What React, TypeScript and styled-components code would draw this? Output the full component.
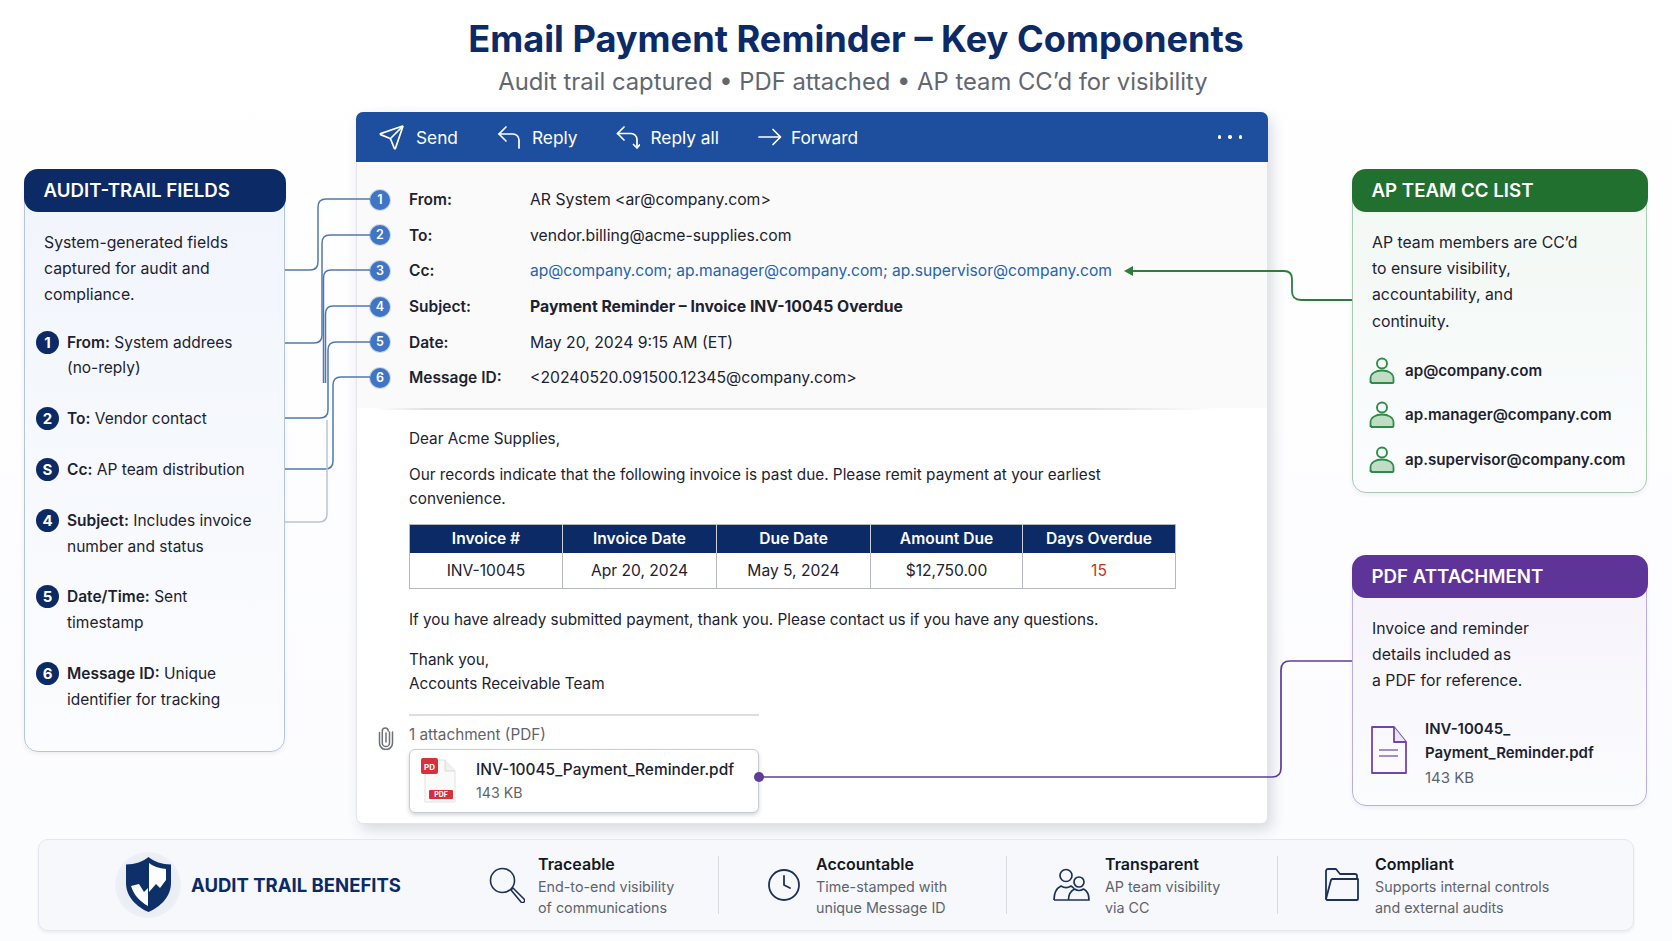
import styled, { createGlobalStyle } from "styled-components";
import { Clock, Send } from "lucide-react";

const GlobalStyle = createGlobalStyle`
  html, body {
    margin: 0;
    padding: 0;
    background: #fff;
  }
  body {
    font-family: Inter, "Liberation Sans", sans-serif;
    color: #1d2230;
  }
  * { box-sizing: border-box; }
`;

const NAVY = "#0c2a66";

const Page = styled.div`
  position: relative;
  width: 1672px;
  height: 941px;
  overflow: hidden;
  background: linear-gradient(180deg, #ffffff 0%, #fdfdff 60%, #fbfcfe 100%);
`;

const Wires = styled.svg`
  position: absolute;
  inset: 0;
  pointer-events: none;
  z-index: 2;
`;

const TitleBlock = styled.header`
  height: 112px;
  padding: 17px 0 0 40px;
  text-align: center;
`;

const Title = styled.h1`
  margin: 0;
  font-size: 36.2px;
  line-height: 44px;
  font-weight: 700;
  color: ${NAVY};
`;

const Subtitle = styled.p`
  margin: 2px 0 0 -6px;
  font-size: 23.8px;
  line-height: 38px;
  color: #62676f;
`;

const MainRow = styled.div`
  display: flex;
  align-items: flex-start;
  padding-left: 24px;
`;

const LeftColumn = styled.div`
  width: 261px;
  padding-top: 58px;
`;

const SideColumn = styled.div`
  width: 295px;
  display: flex;
  flex-direction: column;
  gap: 63px;
  padding-top: 58px;
`;

const Panel = styled.section<{ $edge: string; $tint: string; $height: number }>`
  height: ${(p) => p.$height}px;
  border: 1.5px solid ${(p) => p.$edge};
  border-radius: 14px;
  background: linear-gradient(180deg, ${(p) => p.$tint} 0%, #fbfcfe 100%);
  box-shadow: 0 2px 4px rgba(60, 80, 120, 0.08);
`;

const PanelHead = styled.h2<{ $bg: string }>`
  margin: -2px -1.5px 0;
  height: 42.5px;
  padding: 1px 0 0 20px;
  display: flex;
  align-items: center;
  border-radius: 14px;
  background: ${(p) => p.$bg};
  color: #fff;
  font-size: 18.7px;
  font-weight: 600;
`;

const PanelBody = styled.div`
  padding: 18px 0 0 19px;
  font-size: 15.5px;
`;

const Intro = styled.p`
  margin: 0;
  font-size: 15.8px;
  line-height: 26.4px;
`;

const FieldList = styled.ol`
  list-style: none;
  margin: 21px 0 0 -8px;
  padding: 0;
  display: flex;
  flex-direction: column;
  gap: 25.3px;
`;

const FieldItem = styled.li`
  display: grid;
  grid-template-columns: 23px 1fr;
  column-gap: 8px;
  line-height: 25.6px;
`;

const FieldBadge = styled.span`
  width: 23px;
  height: 23px;
  margin-top: 1px;
  border-radius: 50%;
  background: ${NAVY};
  color: #fff;
  font-size: 15px;
  font-weight: 700;
  line-height: 23px;
  text-align: center;
`;

const Strong = styled.b`
  font-weight: 600;
`;

const MemberList = styled.ul`
  list-style: none;
  margin: 21px 0 0 -3px;
  padding: 0;
  display: flex;
  flex-direction: column;
  gap: 16px;
`;

const Member = styled.li`
  display: flex;
  align-items: center;
  gap: 10px;
  height: 28.5px;
  font-weight: 600;
  font-size: 15.15px;
`;

const PdfFile = styled.div`
  display: flex;
  gap: 17px;
  align-items: flex-start;
  margin: 22px 0 0 -2px;
  font-size: 15px;
  line-height: 24.6px;
  font-weight: 600;
  & > svg {
    margin-top: 8px;
  }
`;

const PdfSize = styled.div`
  font-weight: 400;
  color: #5f646c;
`;

const Mail = styled.main`
  width: 912px;
  height: 712px;
  margin: 0 84px 0 71px;
  border: 1px solid #e2e5ea;
  border-radius: 7px;
  background: #fff;
  box-shadow: 4px 6px 14px rgba(30, 40, 60, 0.16);
  display: flex;
  flex-direction: column;
`;

const Toolbar = styled.nav`
  height: 50px;
  margin: -1px -1px 0;
  padding: 0 26px 0 22px;
  display: flex;
  align-items: center;
  gap: 39px;
  border-radius: 7px 7px 0 0;
  background: #1e4f9e;
  color: #fff;
  font-size: 17.3px;
`;

const ToolButton = styled.span<{ $gap: number }>`
  display: flex;
  align-items: center;
  gap: ${(p) => p.$gap}px;
`;

const Dots = styled.span`
  margin-left: auto;
  display: flex;
  gap: 7px;
  & > i {
    width: 3.5px;
    height: 3.5px;
    border-radius: 50%;
    background: #fff;
  }
`;

const Fields = styled.div`
  height: 246px;
  padding: 20px 0 0 13px;
  background: #fafafa;
  font-size: 15.75px;
`;

const HeaderRow = styled.div`
  height: 35.6px;
  display: grid;
  grid-template-columns: 20px 121px 1fr;
  align-items: center;
`;

const WireBadge = styled.span`
  width: 20px;
  height: 20px;
  border-radius: 50%;
  background: #3f75c4;
  color: #fff;
  font-size: 12.5px;
  font-weight: 600;
  line-height: 20px;
  text-align: center;
  box-shadow: 0 0 0 1px rgba(63, 117, 196, 0.25);
`;

const HeaderLabel = styled.span`
  margin-left: 19px;
  font-size: 15.5px;
  font-weight: 600;
`;

const HeaderValue = styled.span<{ $link?: boolean; $bold?: boolean }>`
  margin-left: 19px;
  color: ${(p) => (p.$link ? "#2464ae" : "inherit")};
  font-size: ${(p) => (p.$link ? "15.6px" : "inherit")};
  font-weight: ${(p) => (p.$bold ? 650 : 400)};
`;

const Rule = styled.div`
  height: 2px;
  margin: 0 48px 0 19px;
  background: linear-gradient(90deg, transparent 0%, #dfe1e5 6%, #dfe1e5 85%, transparent 100%);
`;

const Body = styled.div`
  padding: 17px 0 0 52px;
  font-size: 15.3px;
  line-height: 24px;
`;

const Para = styled.p<{ $top: number }>`
  margin: ${(p) => p.$top}px 0 0;
  max-width: 720px;
`;

const InvoiceTable = styled.table`
  width: 766px;
  margin-top: 13px;
  border-collapse: collapse;
  table-layout: fixed;
  border: 1.5px solid #b5b8bf;
  font-size: 15.6px;
  text-align: center;
`;

const HeadCell = styled.th<{ $width: number }>`
  width: ${(p) => p.$width}px;
  height: 28px;
  padding: 0;
  background: ${NAVY};
  color: #fff;
  font-weight: 600;
  border-left: 1.5px solid #c9cfdb;
  &:first-child { border-left: none; }
`;

const Cell = styled.td<{ $alert?: boolean }>`
  height: 36px;
  padding: 2px 0 0;
  border-left: 1.5px solid #b5b8bf;
  color: ${(p) => (p.$alert ? "#c8312b" : "inherit")};
  &:first-child { border-left: none; }
`;

const AttachRule = styled.div`
  width: 350px;
  height: 1.5px;
  margin-top: 18px;
  background: #dcdee2;
`;

const AttachLabel = styled.div`
  position: relative;
  margin-top: 7px;
  height: 26px;
  color: #5f646c;
  & > svg {
    position: absolute;
    left: -32px;
    top: 3px;
  }
`;

const AttachCard = styled.div`
  width: 350px;
  height: 64px;
  display: flex;
  align-items: center;
  gap: 19px;
  padding-left: 11px;
  border: 1.5px solid #c9ccd2;
  border-radius: 6px;
  background: #fff;
  box-shadow: 0 2px 4px rgba(30, 40, 60, 0.2);
`;

const AttachName = styled.div`
  font-size: 15.45px;
  font-weight: 500;
  line-height: 23px;
`;

const AttachSize = styled.div`
  color: #5f646c;
  font-size: 14.2px;
  line-height: 23px;
`;

const BenefitBar = styled.footer`
  position: absolute;
  left: 38px;
  top: 839px;
  width: 1596px;
  height: 92px;
  display: grid;
  grid-template-columns: 450px 230px 288px 271px 1fr;
  align-items: center;
  border: 1.5px solid #e4e7ef;
  border-radius: 10px;
  background: #f6f8fc;
  box-shadow: 0 2px 3px rgba(60, 70, 100, 0.08);
`;

const Brand = styled.div`
  display: flex;
  align-items: center;
  gap: 10px;
  padding-left: 76px;
  margin-top: -1px;
  color: ${NAVY};
  font-size: 18.5px;
  font-weight: 700;
`;

const ShieldHalo = styled.span`
  width: 66px;
  height: 66px;
  display: flex;
  align-items: center;
  justify-content: center;
  border-radius: 50%;
  background: radial-gradient(circle, #e9edf4 55%, rgba(238, 241, 247, 0) 100%);
`;

const Benefit = styled.div<{ $pad: number; $gap: number; $divider?: boolean }>`
  height: 58px;
  display: flex;
  align-items: center;
  gap: ${(p) => p.$gap}px;
  padding-left: ${(p) => p.$pad}px;
  border-right: ${(p) => (p.$divider ? "1.5px solid #d9dce2" : "none")};
  color: #1d3157;
`;

const BenefitText = styled.div`
  color: #5f646c;
  font-size: 14.3px;
  line-height: 21px;
`;

const BenefitTitle = styled.div`
  color: #14181f;
  font-size: 16px;
  font-weight: 600;
  line-height: 23px;
`;

const ReplyIcon = () => (
  <svg width="24" height="26" viewBox="0 0 24 26" fill="none" stroke="#fff" strokeWidth="1.7" strokeLinecap="round" strokeLinejoin="round">
    <path d="M9 3 2 10l7 7" />
    <path d="M2 10h14a6 6 0 0 1 6 6v8" />
  </svg>
);

const ReplyAllIcon = () => (
  <svg width="24" height="26" viewBox="0 0 24 26" fill="none" stroke="#fff" strokeWidth="1.7" strokeLinecap="round" strokeLinejoin="round">
    <path d="M8 3 1.500 9.500 8 16" />
    <path d="M1.500 9.500H15a6 6 0 0 1 6 6v8" />
    <path d="m17.500 20.500 3.500 3.500 2.500-3" />
  </svg>
);

const ForwardIcon = () => (
  <svg width="24" height="26" viewBox="0 0 24 26" fill="none" stroke="#fff" strokeWidth="1.7" strokeLinecap="round" strokeLinejoin="round">
    <path d="M1 13h21" />
    <path d="m15 5.500 7.500 7.500-7.500 7.500" />
  </svg>
);

const Paperclip = () => (
  <svg width="18" height="24" viewBox="0 0 18 24" fill="none" stroke="#6d7076" strokeWidth="1.5" strokeLinecap="round">
    <path d="M9 7v9" />
    <path d="M12.500 6v11a3.600 3.600 0 0 1-7.200 0V5a3 3 0 0 1 6 0" />
    <path d="M2.500 6.500v10.500a6.500 6.500 0 0 0 13 0V6" />
  </svg>
);

const PdfIcon = () => (
  <svg width="36" height="46" viewBox="0 0 36 46">
    <path d="M4 2h20l10 11v31H4z" fill="#fbfafa" stroke="#e3e0e0" />
    <path d="M24 2v11h10" fill="#f1efef" stroke="#dcd9d9" />
    <rect x="0" y="0" width="17" height="16" rx="2" fill="#d8303a" />
    <text x="8.500" y="11.500" fontSize="8" fontWeight="700" fill="#fff" textAnchor="middle" fontFamily="Inter">PD</text>
    <rect x="8" y="32" width="24" height="9" rx="1" fill="#d8303a" />
    <text x="20" y="39" fontSize="7" fontWeight="700" fill="#fff" textAnchor="middle" fontFamily="Inter">PDF</text>
  </svg>
);

const Person = () => (
  <svg width="26" height="27" viewBox="0 0 26 27" fill="none">
    <path d="M1.500 25v-3.500c0-5 5-8 11.500-8s11.500 3 11.500 8V25a1 1 0 0 1-1 1h-21a1 1 0 0 1-.5-1z" fill="#bfdcc4" stroke="#2f8b4a" strokeWidth="1.8" />
    <circle cx="13" cy="6.500" r="5" fill="#f4f9f5" stroke="#2f8b4a" strokeWidth="1.9" />
  </svg>
);

const PurpleFile = () => (
  <svg width="38" height="50" viewBox="0 0 38 50" fill="none" stroke="#6f46ad" strokeWidth="1.8" strokeLinejoin="round">
    <path d="M2 2h22l12 15v31H2z" />
    <path d="M24 2v15h12" fill="#ece6f6" />
    <path d="M9 25h19M9 31h19" stroke="#a48ccd" strokeWidth="2.2" />
  </svg>
);

const Shield = () => (
  <svg width="45" height="55" viewBox="0 0 45 55">
    <path d="M22.500 0c5 4.500 13.500 7.500 22.500 7.500V26c0 14-11 24-22.500 29C11 50 0 40 0 26V7.500C9 7.500 17.500 4.500 22.500 0z" fill="#0f2f68" />
    <path d="M23 6c4 3 10 5.500 17 6v11l-6 8-4-4-7 8z" fill="#fff" />
    <path d="M5 29l8-2 5 8 4-4v18C15 45 8 39 5 29z" fill="#fff" />
  </svg>
);

const Magnifier = () => (
  <svg width="36" height="36" viewBox="0 0 36 36" fill="none" stroke="currentColor" strokeWidth="1.6" strokeLinejoin="round">
    <circle cx="13.500" cy="13.500" r="12" />
    <path d="M22 23l2-2 11 11a1.600 1.600 0 0 1-3 3z" />
  </svg>
);

const Team = () => (
  <svg width="37" height="34" viewBox="0 0 37 34" fill="none" stroke="currentColor" strokeWidth="1.7" strokeLinejoin="round">
    <circle cx="13" cy="7.500" r="6" />
    <path d="M1 32c0-8 3-12 7-14 3 2 7 2 10 0 1 .6 2 1.400 3 2.500" />
    <circle cx="26" cy="14" r="5" />
    <path d="M1 32h35c0-7-2.500-9.500-5.500-11-3 2-6 2-9 0-3 1.500-6 5-6 11" />
  </svg>
);

const Folder = () => (
  <svg width="36" height="34" viewBox="0 0 36 34" fill="none" stroke="currentColor" strokeWidth="1.800" strokeLinejoin="round">
    <path d="M2 31V3a2 2 0 0 1 2-2h8l4 5h15a2 2 0 0 1 2 2v3" />
    <path d="M2 31 7 12a2 2 0 0 1 2-1h25v20a1 1 0 0 1-1 1H3z" />
  </svg>
);

const headerRows: { label: string; value: string; link?: boolean; bold?: boolean }[] = [
  { label: "From:", value: "AR System <ar@company.com>" },
  { label: "To:", value: "vendor.billing@acme-supplies.com" },
  { label: "Cc:", value: "ap@company.com; ap.manager@company.com; ap.supervisor@company.com", link: true },
  { label: "Subject:", value: "Payment Reminder – Invoice INV-10045 Overdue", bold: true },
  { label: "Date:", value: "May 20, 2024 9:15 AM (ET)" },
  { label: "Message ID:", value: "<20240520.091500.12345@company.com>" },
];

const fieldNotes: { badge: string; name: string; note: string; more?: string }[] = [
  { badge: "1", name: "From:", note: "System addrees", more: "(no-reply)" },
  { badge: "2", name: "To:", note: "Vendor contact" },
  { badge: "S", name: "Cc:", note: "AP team distribution" },
  { badge: "4", name: "Subject:", note: "Includes invoice", more: "number and status" },
  { badge: "5", name: "Date/Time:", note: "Sent", more: "timestamp" },
  { badge: "6", name: "Message ID:", note: "Unique", more: "identifier for tracking" },
];

const tableColumns = [
  { name: "Invoice #", width: 153 },
  { name: "Invoice Date", width: 154 },
  { name: "Due Date", width: 154 },
  { name: "Amount Due", width: 152 },
  { name: "Days Overdue", width: 153 },
];

const blueWires = [
  "M285 270H310Q318 270 318 262V207Q318 199 326 199H370",
  "M285 343H314Q322 343 322 335V243Q322 235 330 235H370",
  "M323.500 383V278Q323.500 270 331 270H370",
  "M325.500 383V314Q325.500 306 333 306H370",
  "M285 418H320Q328 418 328 410V350Q328 342 336 342H370",
  "M285 469H325Q333 469 333 461V385Q333 377 341 377H370",
];

const App = () => (
  <Page>
    <GlobalStyle />
    <TitleBlock>
      <Title>Email Payment Reminder – Key Components</Title>
      <Subtitle>Audit trail captured • PDF attached • AP team CC’d for visibility</Subtitle>
    </TitleBlock>

    <MainRow>
      <LeftColumn>
        <Panel $edge="#b4c5de" $tint="#f1f5fc" $height={582}>
          <PanelHead $bg={NAVY}>AUDIT-TRAIL FIELDS</PanelHead>
          <PanelBody>
            <Intro>
              System-generated fields
              <br />
              captured for audit and
              <br />
              compliance.
            </Intro>
            <FieldList>
              {fieldNotes.map((f) => (
                <FieldItem key={f.name}>
                  <FieldBadge>{f.badge}</FieldBadge>
                  <span>
                    <Strong>{f.name}</Strong> {f.note}
                    {f.more && (
                      <>
                        <br />
                        {f.more}
                      </>
                    )}
                  </span>
                </FieldItem>
              ))}
            </FieldList>
          </PanelBody>
        </Panel>
      </LeftColumn>

      <Mail>
        <Toolbar>
          <ToolButton $gap={11}>
            <Send size={27} strokeWidth={1.5} />
            Send
          </ToolButton>
          <ToolButton $gap={11}>
            <ReplyIcon />
            Reply
          </ToolButton>
          <ToolButton $gap={10}>
            <ReplyAllIcon />
            Reply all
          </ToolButton>
          <ToolButton $gap={9}>
            <ForwardIcon />
            Forward
          </ToolButton>
          <Dots>
            <i />
            <i />
            <i />
          </Dots>
        </Toolbar>

        <Fields>
          {headerRows.map((r, i) => (
            <HeaderRow key={r.label}>
              <WireBadge>{i + 1}</WireBadge>
              <HeaderLabel>{r.label}</HeaderLabel>
              <HeaderValue $link={r.link} $bold={r.bold}>
                {r.value}
              </HeaderValue>
            </HeaderRow>
          ))}
        </Fields>
        <Rule />

        <Body>
          <Para $top={0}>Dear Acme Supplies,</Para>
          <Para $top={12}>
            Our records indicate that the following invoice is past due. Please remit payment at your earliest convenience.
          </Para>
          <InvoiceTable>
            <thead>
              <tr>
                {tableColumns.map((c) => (
                  <HeadCell key={c.name} $width={c.width}>
                    {c.name}
                  </HeadCell>
                ))}
              </tr>
            </thead>
            <tbody>
              <tr>
                <Cell>INV-10045</Cell>
                <Cell>Apr 20, 2024</Cell>
                <Cell>May 5, 2024</Cell>
                <Cell>$12,750.00</Cell>
                <Cell $alert>15</Cell>
              </tr>
            </tbody>
          </InvoiceTable>
          <Para $top={19}>If you have already submitted payment, thank you. Please contact us if you have any questions.</Para>
          <Para $top={16}>
            Thank you,
            <br />
            Accounts Receivable Team
          </Para>
          <AttachRule />
          <AttachLabel>
            <Paperclip />1 attachment (PDF)
          </AttachLabel>
          <AttachCard>
            <PdfIcon />
            <div>
              <AttachName>INV-10045_Payment_Reminder.pdf</AttachName>
              <AttachSize>143 KB</AttachSize>
            </div>
          </AttachCard>
        </Body>
      </Mail>

      <SideColumn>
        <Panel $edge="#a9c9b0" $tint="#f1f8f3" $height={323}>
          <PanelHead $bg="#22702f">AP TEAM CC LIST</PanelHead>
          <PanelBody>
            <Intro>
              AP team members are CC’d
              <br />
              to ensure visibility,
              <br />
              accountability, and
              <br />
              continuity.
            </Intro>
            <MemberList>
              <Member>
                <Person />
                ap@company.com
              </Member>
              <Member>
                <Person />
                ap.manager@company.com
              </Member>
              <Member>
                <Person />
                ap.supervisor@company.com
              </Member>
            </MemberList>
          </PanelBody>
        </Panel>
        <Panel $edge="#bcaedb" $tint="#f6f3fb" $height={250}>
          <PanelHead $bg="#5e3498">PDF ATTACHMENT</PanelHead>
          <PanelBody>
            <Intro>
              Invoice and reminder
              <br />
              details included as
              <br />a PDF for reference.
            </Intro>
            <PdfFile>
              <PurpleFile />
              <div>
                INV-10045_
                <br />
                Payment_Reminder.pdf
                <PdfSize>143 KB</PdfSize>
              </div>
            </PdfFile>
          </PanelBody>
        </Panel>
      </SideColumn>
    </MainRow>

    <BenefitBar>
      <Brand>
        <ShieldHalo>
          <Shield />
        </ShieldHalo>
        AUDIT TRAIL BENEFITS
      </Brand>
      <Benefit $pad={0} $gap={13} $divider>
        <Magnifier />
        <BenefitText>
          <BenefitTitle>Traceable</BenefitTitle>
          End-to-end visibility
          <br />
          of communications
        </BenefitText>
      </Benefit>
      <Benefit $pad={47} $gap={14} $divider>
        <Clock size={36} strokeWidth={1.2} />
        <BenefitText>
          <BenefitTitle>Accountable</BenefitTitle>
          Time-stamped with
          <br />
          unique Message ID
        </BenefitText>
      </Benefit>
      <Benefit $pad={46} $gap={15} $divider>
        <Team />
        <BenefitText>
          <BenefitTitle>Transparent</BenefitTitle>
          AP team visibility
          <br />
          via CC
        </BenefitText>
      </Benefit>
      <Benefit $pad={46} $gap={15}>
        <Folder />
        <BenefitText>
          <BenefitTitle>Compliant</BenefitTitle>
          Supports internal controls
          <br />
          and external audits
        </BenefitText>
      </Benefit>
    </BenefitBar>

    <Wires width="1672" height="941" fill="none">
      {blueWires.map((d) => (
        <path key={d} d={d} stroke="#4f79b0" strokeWidth="1.5" />
      ))}
      <path d="M285 522H319Q327 522 327 514V420" stroke="#b9c3d3" strokeWidth="1.5" />
      <path d="M1130 271H1284Q1292 271 1292 279V291Q1292 300 1301 300H1352" stroke="#2f7d3d" strokeWidth="1.8" />
      <path d="M1124 271l9-5v10z" fill="#2f7d3d" />
      <path d="M759 777H1272Q1281 777 1281 768V670Q1281 661 1290 661H1352" stroke="#5d3d9c" strokeWidth="1.7" />
      <circle cx="759" cy="777" r="5" fill="#5d3d9c" />
    </Wires>
  </Page>
);

export default App;
